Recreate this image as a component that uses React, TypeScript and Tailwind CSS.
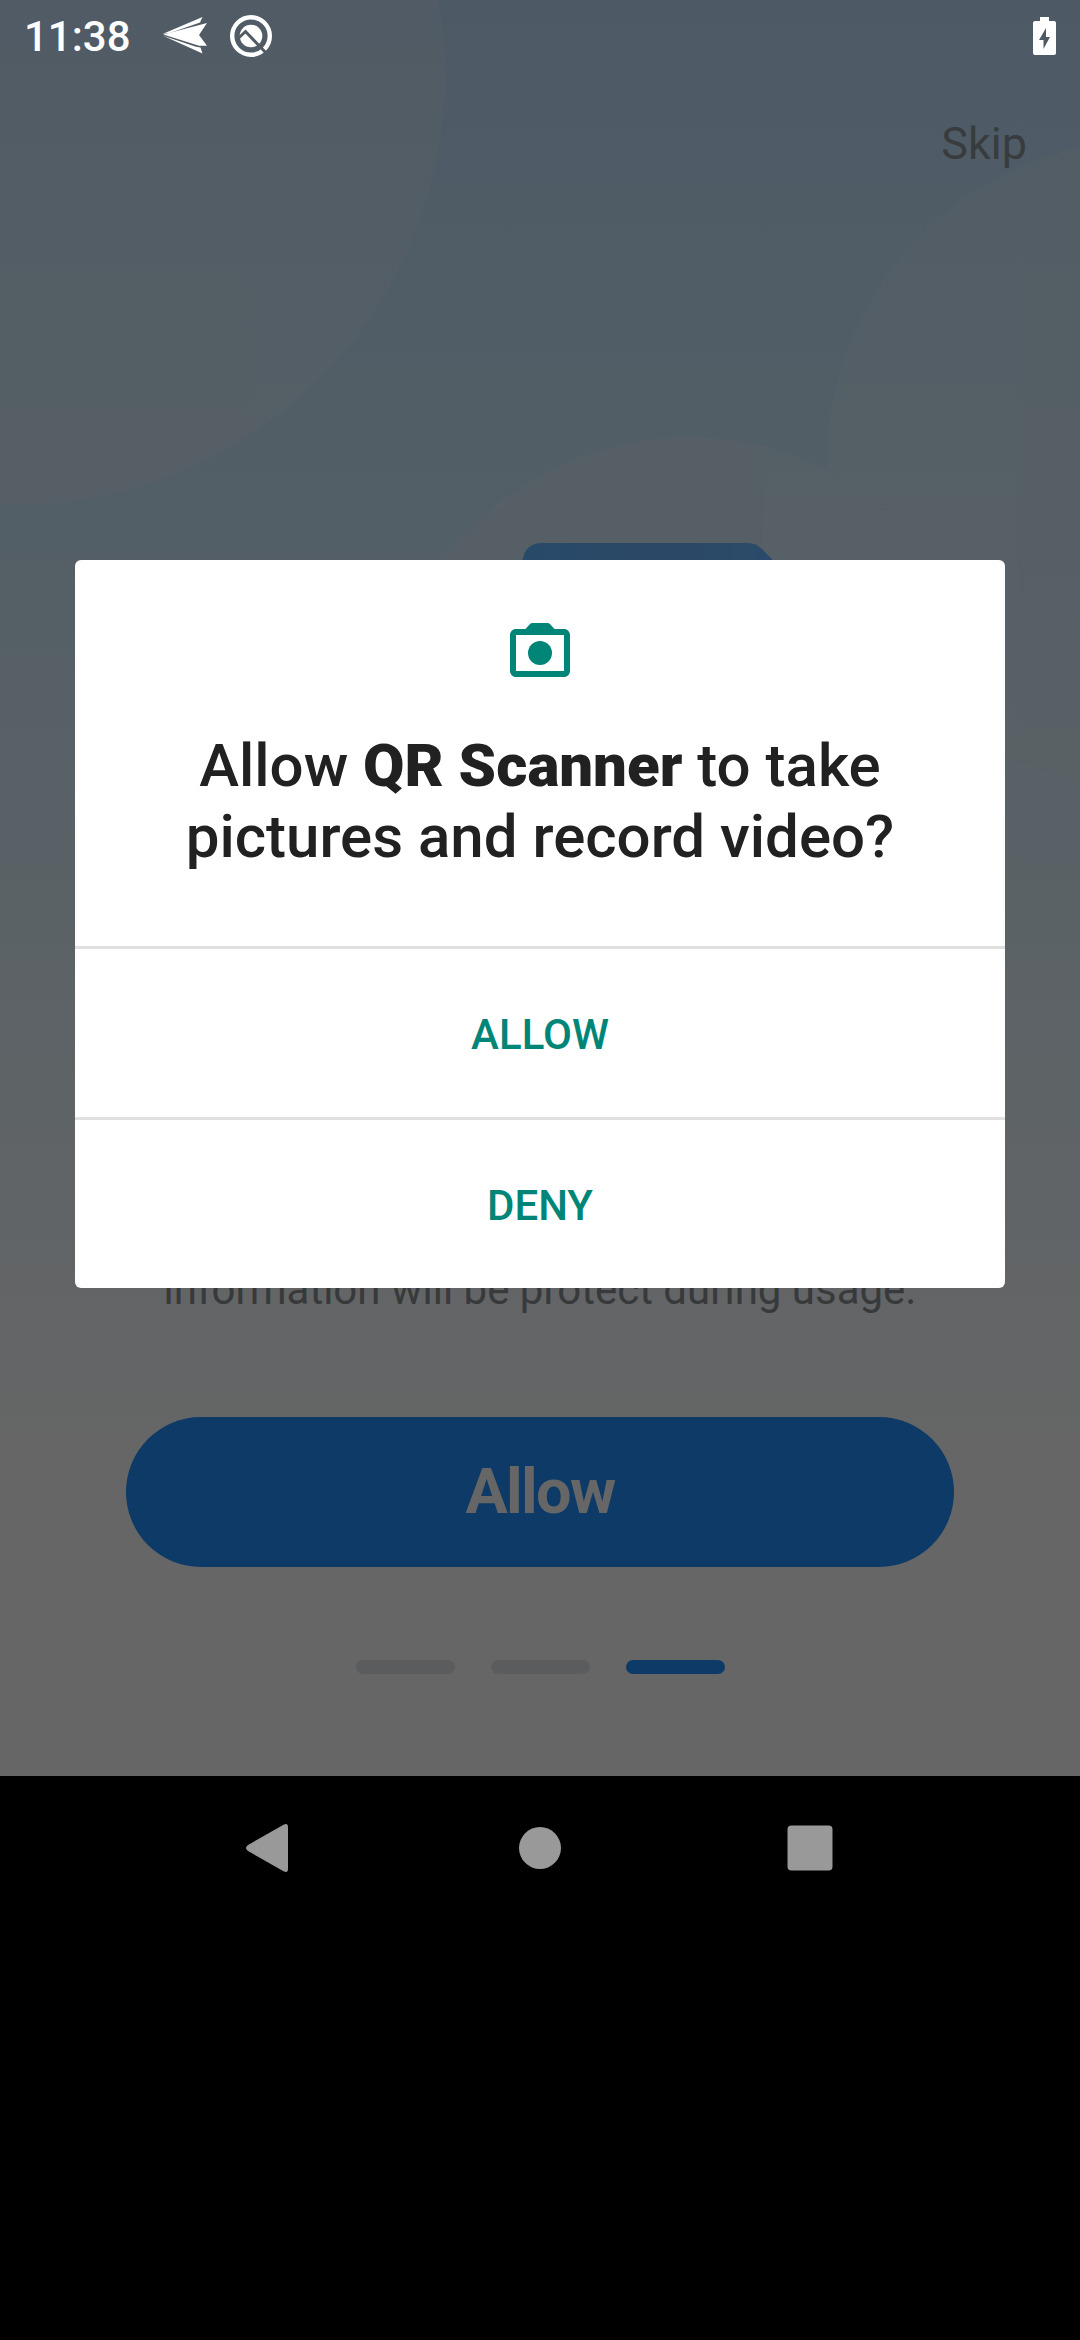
const title = "text-[60px] leading-[71px] font-medium text-[#212121] text-center";

function Backdrop() {
  return (
    <svg className="absolute inset-0 w-full h-full" viewBox="0 0 1080 1776" aria-hidden="true">
      <defs>
        <linearGradient id="sky" x1="0" y1="0" x2="0" y2="1">
          <stop offset="0" stopColor="#4d5a66" />
          <stop offset="0.3" stopColor="#535f66" />
          <stop offset="0.83" stopColor="#666666" />
          <stop offset="1" stopColor="#666666" />
        </linearGradient>
        <linearGradient id="device" x1="0" y1="0" x2="1" y2="0">
          <stop offset="0" stopColor="#284a69" />
          <stop offset="0.5" stopColor="#2b4866" />
          <stop offset="0.85" stopColor="#2b4b69" />
          <stop offset="1" stopColor="#29466e" />
        </linearGradient>
      </defs>
      <rect width="1080" height="1776" fill="url(#sky)" />
      <g fill="#656566" opacity="0.18">
        <circle cx="15" cy="75" r="430" />
        <circle cx="1152" cy="463" r="325" />
        <circle cx="689" cy="745" r="308" />
      </g>
      <path d="M522 620V563Q524 543 542 543H748Q756 543 762 549L790 578V620Z" fill="url(#device)" />
    </svg>
  );
}

function StatusBar() {
  return (
    <header className="relative flex h-[72px] items-center justify-between px-[24px] text-white">
      <div className="flex items-center">
        <span className="w-[108px] text-[42px] leading-[49px] font-medium whitespace-nowrap">11:38</span>
        <svg className="ml-[30px] w-[46px] h-[40px]" viewBox="0 0 46 40" fill="#fff">
          <path d="M.5 18 40.500 1 38 6.500 8 17Z" />
          <path d="M1.300 18.500 45 7 37 19 45 29.800 37 29.800Z" />
          <path d="M.5 19.500 34 30.800 38.500 31.500 40.500 37.500Z" />
        </svg>
        <svg className="ml-[21px] w-[44px] h-[44px]" viewBox="0 0 44 44">
          <mask id="slash">
            <rect width="44" height="44" fill="#fff" />
            <path d="M7.500 26 16.500 17.500 38 40" stroke="#000" strokeWidth="3" fill="none" />
          </mask>
          <g mask="url(#slash)">
            <circle cx="22" cy="22" r="18.800" stroke="#fff" strokeWidth="4.400" fill="none" />
            <circle cx="22" cy="22" r="11.300" fill="#fff" />
          </g>
        </svg>
      </div>
      <svg className="w-[23px] h-[38px]" viewBox="0 0 23 38">
        <path d="M7 0H16V4H21Q23 4 23 6V36Q23 38 21 38H2Q0 38 0 36V6Q0 4 2 4H7ZM13 11 6 23H10.500V32L17 20H13Z" fill="#fff" fillRule="evenodd" />
      </svg>
    </header>
  );
}

function PermissionDialog() {
  return (
    <section role="dialog" className="absolute left-[75px] top-[560px] w-[930px] h-[728px] rounded-[6px] bg-white overflow-hidden">
      <div className="flex h-[386px] flex-col items-center pt-[54px]">
        <svg className="w-[72px] h-[72px]" viewBox="0 0 24 24" fill="#008577">
          <path fillRule="evenodd" d="M20 5h-3.170L15.400 3.400Q15 3 14.500 3h-5Q9 3 8.600 3.400L7.170 5H4C2.900 5 2 5.900 2 7v12c0 1.100.9 2 2 2h16c1.100 0 2-.9 2-2V7c0-1.100-.9-2-2-2Zm0 14H4V7h16v12Z" />
          <circle cx="12" cy="13" r="4" />
        </svg>
        <h1 className={title + " mt-[44px]"}>
          Allow <b className="font-black">QR Scanner</b> to take
          <br />
          pictures and record video?
        </h1>
      </div>
      <button className="block h-[171px] w-full border-t-[3px] border-[#e0e0e0] pt-[2px] text-[42px] leading-[49px] font-medium text-[#008577]">ALLOW</button>
      <button className="block h-[171px] w-full border-t-[3px] border-[#e0e0e0] pt-[2px] text-[42px] leading-[49px] font-medium text-[#008577]">DENY</button>
    </section>
  );
}

function NavigationBar() {
  return (
    <nav className="flex h-[144px] items-center justify-center gap-[198px]">
      <svg className="w-[72px] h-[72px]" viewBox="0 0 72 72" fill="#999">
        <path d="M54 15V57Q54 61 50 59.500L14 39Q10 36 14 33L50 12.500Q54 11 54 15Z" />
      </svg>
      <svg className="w-[72px] h-[72px]" viewBox="0 0 72 72" fill="#999">
        <circle cx="36" cy="36" r="21" />
      </svg>
      <svg className="w-[72px] h-[72px]" viewBox="0 0 72 72" fill="#999">
        <rect x="13.500" y="13.500" width="45" height="45" rx="4" />
      </svg>
    </nav>
  );
}

export default function App() {
  return (
    <div className="h-[2340px] w-[1080px] overflow-hidden bg-black font-['Roboto',sans-serif]">
      <main className="relative flex h-[1776px] flex-col overflow-hidden">
        <Backdrop />
        <StatusBar />
        <div className="relative flex justify-end pr-[53px] pt-[45px] text-[45px] leading-[53px] text-[#383c3f]">Skip</div>
        <div className="relative mt-auto flex flex-col items-center pb-[102px]">
          <p className="text-[42px] leading-[49px] text-[#38393a]">information will be protect during usage.</p>
          <div className="mt-[103px] flex h-[150px] w-[828px] items-center justify-center rounded-full bg-[#0d3a66] text-[63px] leading-[74px] font-bold tracking-[-1.7px] text-[#666]">Allow</div>
          <div className="mt-[93px] flex gap-[36px]">
            <i className="h-[14px] w-[99px] rounded-full bg-[#5b5c5e]" />
            <i className="h-[14px] w-[99px] rounded-full bg-[#5b5c5e]" />
            <i className="h-[14px] w-[99px] rounded-full bg-[#0d3a66]" />
          </div>
        </div>
        <PermissionDialog />
      </main>
      <NavigationBar />
    </div>
  );
}
